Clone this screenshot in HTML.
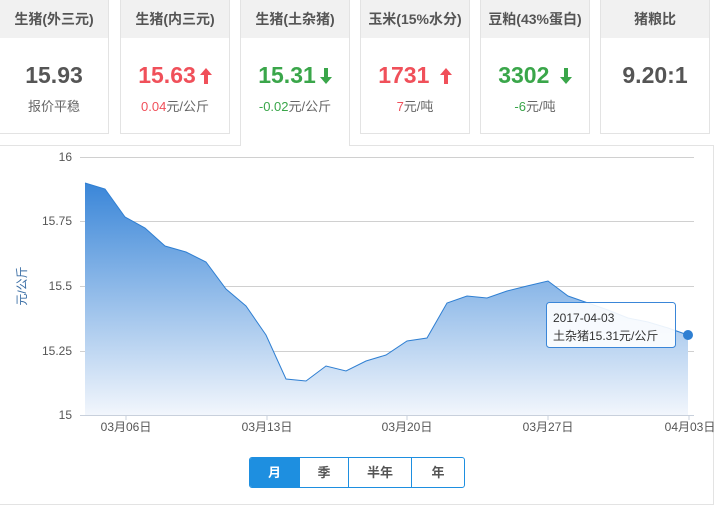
<!DOCTYPE html><html><head><meta charset="utf-8"><style>
*{margin:0;padding:0;box-sizing:border-box}
body{width:717px;height:489px;background:#fff;font-family:"Liberation Sans","Noto Sans CJK SC",sans-serif;position:relative;overflow:hidden}
.card{position:absolute;top:0;width:110px;height:134px;border:1px solid #e3e3e3;border-top:none;background:#fff;text-align:center}
.card .h{height:38px;background:#f1f1f1;line-height:38px;font-size:14px;color:#555;font-weight:bold}
.card .v{margin-top:22px;font-size:23px;font-weight:bold;color:#555;height:30px;line-height:30px}
.card .s{margin-top:6px;font-size:13px;color:#666}
.card .r,.r{color:#f0505a}.card .g,.g{color:#3aa64a}
.v svg{vertical-align:-1px;margin-left:4px}
.panel{position:absolute;left:-1px;top:145px;width:715px;height:360px;border:1px solid #e3e3e3}
.btns{position:absolute;left:249px;top:457px;height:31px;border:1px solid #1e8fe0;border-radius:3px;display:flex;overflow:hidden}
.btns div{height:29px;line-height:29px;text-align:center;font-size:13px;font-weight:bold;color:#555;border-left:1px solid #1e8fe0}
.btns div:first-child{border-left:none;background:#1e8fe0;color:#fff}
</style></head><body>
<div class="panel"></div>
<div class="card" style="left:-1px"><div class="h">生猪(外三元)</div><div class="v">15.93</div><div class="s">报价平稳</div></div>
<div class="card" style="left:120px"><div class="h">生猪(内三元)</div><div class="v r">15.63<svg width="12" height="16" viewBox="0 0 12 16"><path d="M6 0L12 7H8V16H4V7H0Z" fill="#f0505a"/></svg></div><div class="s"><span class="r">0.04</span>元/公斤</div></div>
<div class="card" style="left:240px;height:146px;border-bottom:none;z-index:2"><div class="h">生猪(土杂猪)</div><div class="v g">15.31<svg width="12" height="16" viewBox="0 0 12 16"><path d="M6 16L12 9H8V0H4V9H0Z" fill="#3aa64a"/></svg></div><div class="s"><span class="g">-0.02</span>元/公斤</div></div>
<div class="card" style="left:360px"><div class="h">玉米(15%水分)</div><div class="v r">1731 <svg width="12" height="16" viewBox="0 0 12 16"><path d="M6 0L12 7H8V16H4V7H0Z" fill="#f0505a"/></svg></div><div class="s"><span class="r">7</span>元/吨</div></div>
<div class="card" style="left:480px"><div class="h">豆粕(43%蛋白)</div><div class="v g">3302 <svg width="12" height="16" viewBox="0 0 12 16"><path d="M6 16L12 9H8V0H4V9H0Z" fill="#3aa64a"/></svg></div><div class="s"><span class="g">-6</span>元/吨</div></div>
<div class="card" style="left:600px"><div class="h">猪粮比</div><div class="v">9.20:1</div></div>
<svg style="position:absolute;left:0;top:0" width="717" height="489">
<defs><linearGradient id="gr" x1="0" y1="0" x2="0" y2="1"><stop offset="0" stop-color="#3a86d8"/><stop offset="1" stop-color="#f2f6fc"/></linearGradient></defs>
<g stroke="#d0d0d0" stroke-width="1">
<line x1="80" y1="157.5" x2="694" y2="157.5"/><line x1="80" y1="221.5" x2="694" y2="221.5"/><line x1="80" y1="286.5" x2="694" y2="286.5"/><line x1="80" y1="351.5" x2="694" y2="351.5"/></g>
<path d="M85,183 L105,189 L125,217 L145,228 L165,246 L186,252 L206,262 L226,289 L246,306 L266,335 L286,379 L306,381 L326,366 L346,371 L366,361 L386,355 L407,341 L427,338 L447,303 L467,296 L487,298 L507,291 L527,286 L548,281 L568,296 L588,303 L608,310 L628,318 L648,322 L668,328 L688,335 L688,415 L85,415 Z" fill="url(#gr)"/>
<path d="M85,183 L105,189 L125,217 L145,228 L165,246 L186,252 L206,262 L226,289 L246,306 L266,335 L286,379 L306,381 L326,366 L346,371 L366,361 L386,355 L407,341 L427,338 L447,303 L467,296 L487,298 L507,291 L527,286 L548,281 L568,296 L588,303 L608,310 L628,318 L648,322 L668,328 L688,335" fill="none" stroke="#2f7fd2" stroke-width="1"/>
<line x1="80" y1="415.5" x2="694" y2="415.5" stroke="#c8d0dc"/>
<g stroke="#c8d0dc"><line x1="126" y1="415" x2="126" y2="420"/><line x1="267" y1="415" x2="267" y2="420"/><line x1="407" y1="415" x2="407" y2="420"/><line x1="548" y1="415" x2="548" y2="420"/><line x1="689" y1="415" x2="689" y2="420"/></g>
<g font-size="12" fill="#555" text-anchor="end" font-family="Liberation Sans,sans-serif"><text x="72" y="161">16</text><text x="72" y="225">15.75</text><text x="72" y="290">15.5</text><text x="72" y="355">15.25</text><text x="72" y="419">15</text></g>
<g font-size="12" fill="#555" text-anchor="middle" font-family="Liberation Sans,Noto Sans CJK SC,sans-serif"><text x="126" y="431">03月06日</text><text x="267" y="431">03月13日</text><text x="407" y="431">03月20日</text><text x="548" y="431">03月27日</text><text x="690" y="431">04月03日</text></g>
<text transform="translate(26,286) rotate(-90)" font-size="12" fill="#3a6ea5" text-anchor="middle" font-family="Liberation Sans,Noto Sans CJK SC,sans-serif">元/公斤</text>
<rect x="546.5" y="302.5" width="129" height="45" rx="3" fill="#fff" fill-opacity="0.9" stroke="#3a86d8"/>
<text x="553" y="322" font-size="12" fill="#333" font-family="Liberation Sans,Noto Sans CJK SC,sans-serif">2017-04-03</text>
<text x="553" y="340" font-size="12" fill="#333" font-family="Liberation Sans,Noto Sans CJK SC,sans-serif">土杂猪15.31元/公斤</text>
<circle cx="688" cy="335" r="5" fill="#2f7fd2"/>
</svg>
<div class="btns"><div style="width:49px">月</div><div style="width:49px">季</div><div style="width:63px">半年</div><div style="width:53px">年</div></div>
</body></html>
